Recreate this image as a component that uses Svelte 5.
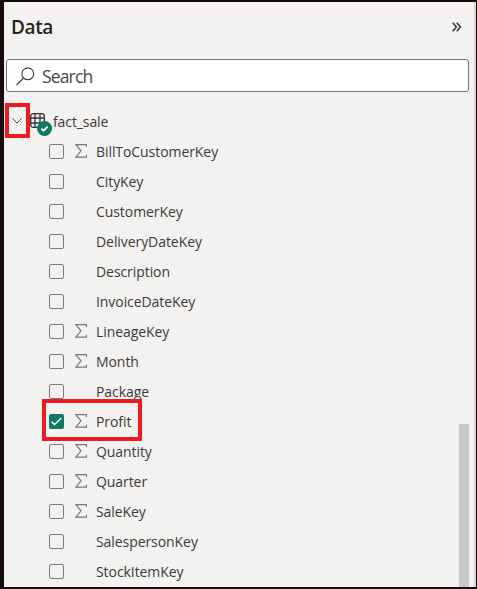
<script>
  const fields = [
    { name: 'BillToCustomerKey', sum: true },
    { name: 'CityKey' },
    { name: 'CustomerKey' },
    { name: 'DeliveryDateKey' },
    { name: 'Description' },
    { name: 'InvoiceDateKey' },
    { name: 'LineageKey', sum: true },
    { name: 'Month', sum: true },
    { name: 'Package' },
    { name: 'Profit', sum: true, checked: true },
    { name: 'Quantity', sum: true },
    { name: 'Quarter', sum: true },
    { name: 'SaleKey', sum: true },
    { name: 'SalespersonKey' },
    { name: 'StockItemKey' }
  ];
</script>

<main class="pane">
  <header>
    <h1>Data</h1>
    <svg class="collapse" width="10" height="10" viewBox="0 0 10 10"><path d="M.7 .7 4.4 5 .7 9.3M4.8 .7 8.5 5 4.8 9.3" /></svg>
  </header>
  <div class="search">
    <svg width="19" height="19" viewBox="0 0 19 19"><circle cx="11.8" cy="6.8" r="5.9" /><path d="M7.6 11 .6 18" /></svg>
    <span>Search</span>
  </div>
  <div class="body">
    <div class="tree">
      <div class="table">
        <span class="chevron">
          <svg width="10" height="6" viewBox="0 0 10 6"><path d="M.5 .5 5 5 9.5 .5" /></svg>
          <i class="mark around-chevron"></i>
        </span>
        <span class="grid">
          <svg width="15" height="15" viewBox="0 0 15 15"><rect x=".7" y=".7" width="13.6" height="13.6" rx="2.5" /><path d="M5 1v13M10 1v13M1 5h13M1 10h13" /></svg>
          <svg class="badge" width="15" height="15" viewBox="0 0 15 15"><circle cx="7.5" cy="7.5" r="7.5" /><path d="M4.4 7.7 6.5 9.7 10.6 5.6" /></svg>
        </span>
        <span class="tname">fact_sale</span>
      </div>
      {#each fields as f}
        <div class="row">
          <span class="box" class:checked={f.checked}>
            {#if f.checked}<svg width="15" height="15" viewBox="0 0 15 15"><path d="M2.5 7.7 5.6 10.6 12.3 4" /></svg>{/if}
          </span>
          <span class="sigma">
            {#if f.sum}<svg width="12" height="14" viewBox="0 0 12 14"><path d="M11.5 3V.6H.8L6 6.8 .8 13.2H11.5V10.8" /></svg>{/if}
          </span>
          <span class="name">{f.name}</span>
          {#if f.checked}<i class="mark around-row"></i>{/if}
        </div>
      {/each}
    </div>
    <div class="track"><div class="thumb"></div></div>
  </div>
</main>

<style>
  .pane {
    box-sizing: border-box;
    width: 477px;
    height: 589px;
    overflow: hidden;
    display: flex;
    flex-direction: column;
    background: #f3f2f0;
    border: solid #180b0c;
    border-width: 2px 1px 2px 4px;
    box-shadow: inset -2px 0 #d5d6d4;
    font-family: 'Open Sans', 'Noto Sans', sans-serif;
    color: #3b3a39;
  }
  svg {
    display: block;
    fill: none;
    stroke: #444;
  }
  header {
    height: 57px;
    flex: none;
    display: flex;
    justify-content: space-between;
    padding: 0 14px 0 7px;
  }
  h1 {
    margin: 11px 0 0;
    font-size: 19px;
    line-height: 28px;
    font-weight: 600;
    letter-spacing: -.4px;
    color: #252423;
  }
  .collapse {
    margin-top: 20px;
    stroke: #333;
    stroke-width: 1.5;
  }
  .search {
    box-sizing: border-box;
    flex: none;
    width: 463px;
    height: 33px;
    margin-left: 2px;
    display: flex;
    padding: 7px 9px;
    gap: 7px;
    border: 1px solid #767574;
    border-radius: 3px;
    background: #fff;
  }
  .search svg {
    stroke-width: 1.2;
  }
  .search span {
    margin-top: -1px;
    font-size: 17.5px;
    line-height: 20px;
    letter-spacing: -.85px;
    color: #484644;
  }
  .body {
    flex: 1;
    min-height: 0;
    display: flex;
    justify-content: space-between;
  }
  .table {
    height: 44px;
    display: flex;
  }
  .chevron {
    position: relative;
    width: 10px;
    margin: 26px 0 0 8px;
  }
  .grid {
    position: relative;
    width: 15px;
    margin: 21px 0 0 8px;
  }
  .grid > svg {
    stroke: #333;
    stroke-width: 1.3;
  }
  .grid > .badge {
    position: absolute;
    left: 7px;
    top: 8px;
    fill: #117865;
    stroke: none;
  }
  .badge path {
    fill: none;
    stroke: #fff;
    stroke-width: 1.7;
  }
  .tname {
    margin: 20px 0 0 8px;
    font-size: 14px;
    line-height: 20px;
    letter-spacing: -.1px;
  }
  .row {
    position: relative;
    height: 30px;
    display: flex;
    padding-left: 45px;
  }
  .box {
    box-sizing: border-box;
    width: 15px;
    height: 15px;
    margin-top: 8px;
    border: 1px solid #7d7b79;
    border-radius: 2px;
  }
  .box.checked {
    border: 0;
    background: #117865;
  }
  .box svg {
    stroke: #fff;
    stroke-width: 1.4;
  }
  .sigma {
    width: 12px;
    margin: 8px 9px 0 11px;
  }
  .sigma svg {
    stroke: #797775;
    stroke-width: 1.2;
  }
  .name {
    margin-top: 6px;
    font-size: 14px;
    line-height: 20px;
    letter-spacing: -.07px;
    white-space: nowrap;
  }
  .mark {
    position: absolute;
    box-sizing: border-box;
    border: 4px solid #ed1c24;
  }
  .around-chevron {
    left: -7px;
    top: -15px;
    width: 25px;
    height: 35px;
  }
  .around-row {
    left: 38px;
    top: -7px;
    width: 100px;
    height: 42px;
    z-index: 1;
  }
  .track {
    width: 10px;
    padding-top: 332px;
    margin-right: 7px;
    display: flex;
  }
  .thumb {
    flex: 1;
    background: #c8c8c8;
  }
</style>
